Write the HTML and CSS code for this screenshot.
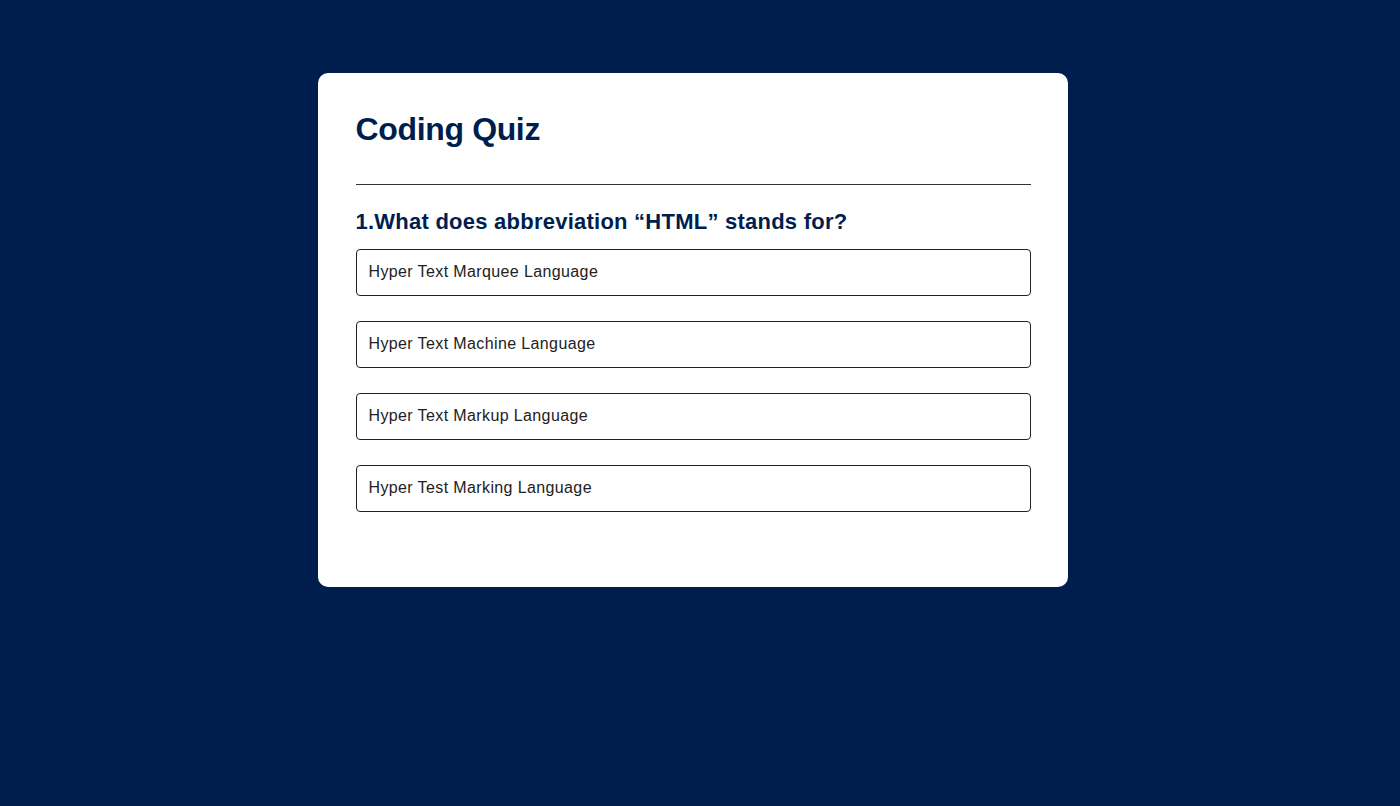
FILE: index.html
```html
<!DOCTYPE html>
<html lang="en">
<head>
<meta charset="UTF-8">
<title>Coding Quiz</title>
<link rel="stylesheet" href="styles.css">
</head>
<body>
<div class="app">
  <h1 class="title">Coding Quiz</h1>
  <div class="quiz">
    <h2 class="question">1.What does abbreviation “HTML” stands for?</h2>
    <div class="answers">
      <button class="btn">Hyper Text Marquee Language</button>
      <button class="btn">Hyper Text Machine Language</button>
      <button class="btn">Hyper Text Markup Language</button>
      <button class="btn">Hyper Test Marking Language</button>
    </div>
  </div>
</div>
</body>
</html>
```
FILE: styles.css
```css
* { box-sizing: border-box; }
html, body { margin: 0; padding: 0; }
body {
  background: #001e4d;
  font-family: "Liberation Sans", Arial, sans-serif;
  min-height: 806px;
  padding: 73px 15px 0 0;
}
.app {
  background: #fff;
  width: 750px;
  margin: 0 auto;
  border-radius: 10px;
  padding: 38px 37px 75px 38px;
}
.title {
  margin: 0;
  font-size: 32px;
  letter-spacing: -0.35px;
  font-weight: bold;
  color: #001e4d;
  border-bottom: 1px solid #333;
  padding-bottom: 36px;
}
.quiz { padding-top: 23px; }
.question {
  margin: 0 0 13px;
  font-size: 22px;
  letter-spacing: 0.24px;
  line-height: 28px;
  font-weight: bold;
  color: #001e4d;
}
.answers { display: flex; flex-direction: column; gap: 25px; }
.btn {
  display: block;
  width: 100%;
  text-align: left;
  background: #fff;
  color: #222;
  font-family: "Liberation Sans", Arial, sans-serif;
  font-size: 16px;
  letter-spacing: 0.38px;
  line-height: 19px;
  padding: 12px 12px 14px;
  border: 1px solid #222;
  border-radius: 4px;
  cursor: pointer;
}
```
